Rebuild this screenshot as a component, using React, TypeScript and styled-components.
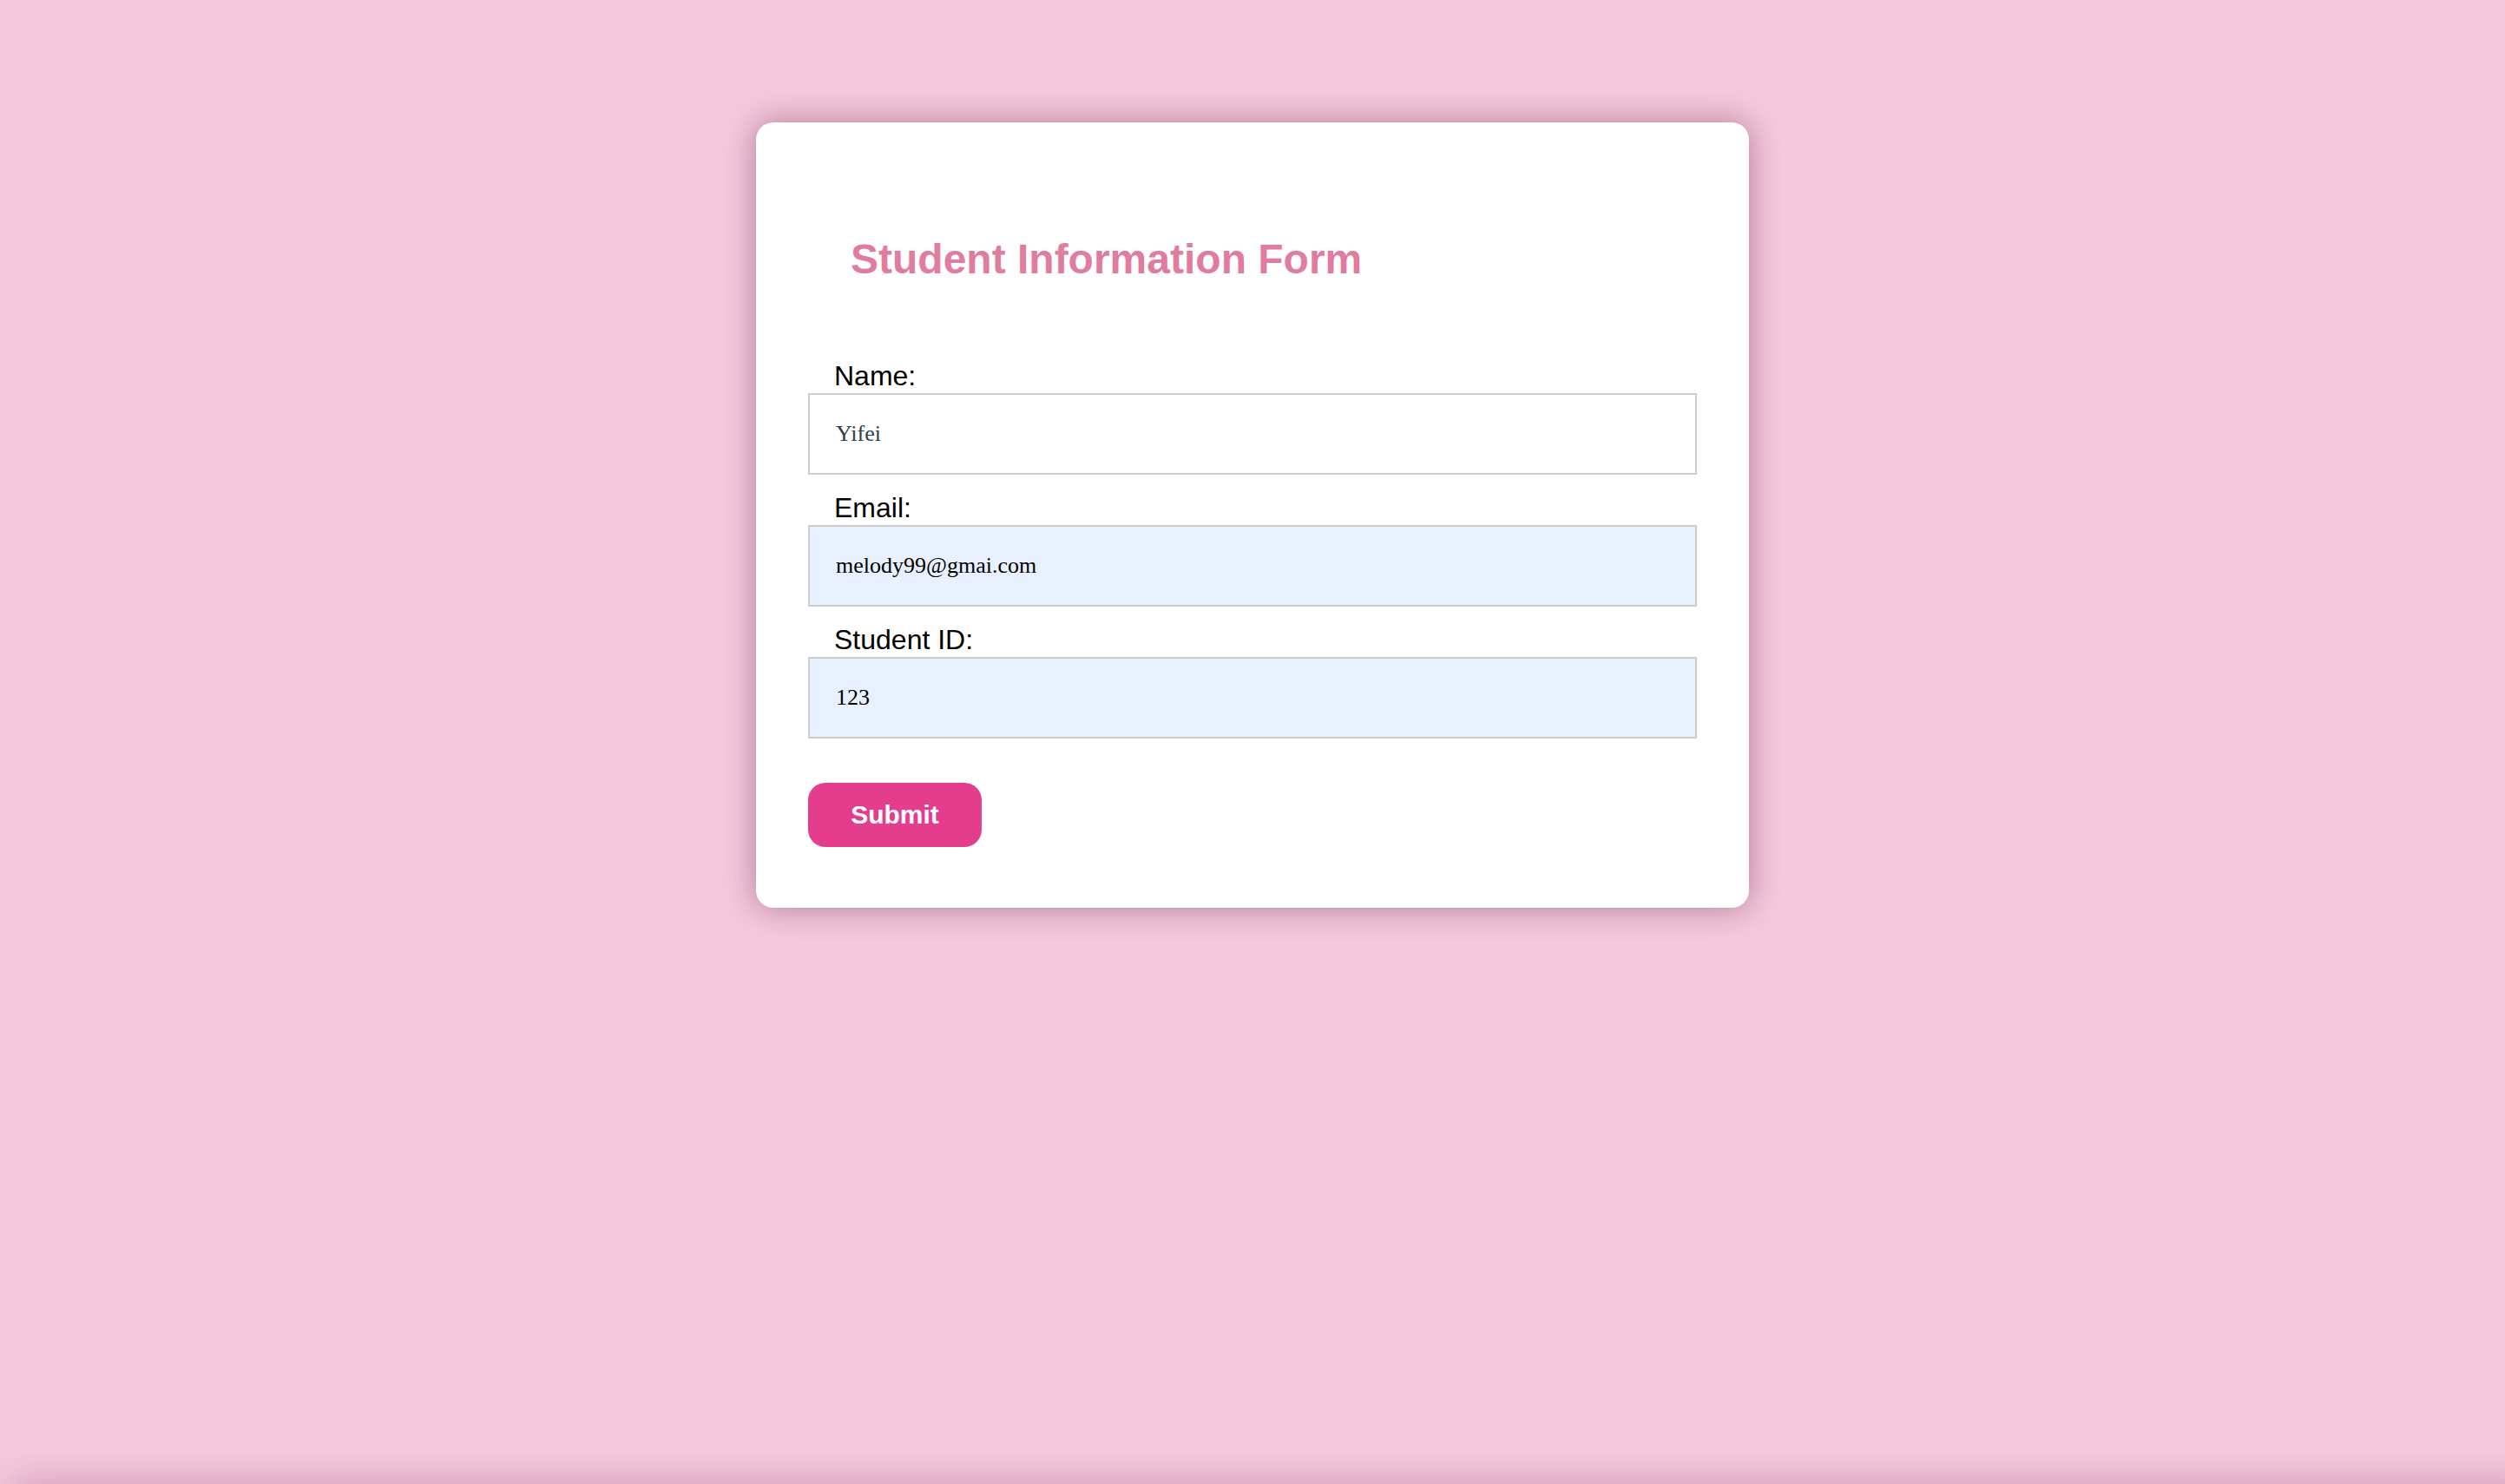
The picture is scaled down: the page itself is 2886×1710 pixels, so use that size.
import React from "react";
import styled, { createGlobalStyle } from "styled-components";

const GlobalStyle = createGlobalStyle`
  html, body {
    margin: 0;
    padding: 0;
    background: #f5c8dc;
  }
  body {
    font-family: "Liberation Sans", Arial, sans-serif;
  }
`;

const Page = styled.div`
  position: relative;
  height: 100vh;
  overflow: hidden;
  background: #f5c8dc;
  padding-top: 141px;
  box-sizing: border-box;

  &::after {
    content: "";
    position: absolute;
    top: 100%;
    left: 16px;
    right: -40px;
    height: 60px;
    background: #f5c8dc;
    box-shadow: 0 0 40px rgba(90, 20, 60, 0.28);
  }
`;

const Card = styled.form`
  width: 1144px;
  margin: 0 auto;
  box-sizing: border-box;
  padding: 60px 60px 70px;
  background: #ffffff;
  border-radius: 20px;
  box-shadow: 0 0 36px rgba(80, 20, 50, 0.42);
  display: flex;
  flex-direction: column;
  align-items: stretch;
`;

const Title = styled.h2`
  margin: 70px 0 89px;
  padding-left: 49px;
  font-family: "Liberation Sans", Arial, sans-serif;
  font-size: 48px;
  font-weight: 700;
  line-height: normal;
  color: #e07ca0;
`;

const Field = styled.div`
  display: flex;
  flex-direction: column;
  margin-bottom: 20px;
`;

const Label = styled.label`
  display: block;
  padding-left: 30px;
  margin-bottom: 1px;
  font-family: "Liberation Sans", Arial, sans-serif;
  font-size: 32px;
  line-height: normal;
  color: #000000;
`;

const Input = styled.input<{ $filled?: boolean }>`
  display: block;
  width: 100%;
  box-sizing: border-box;
  height: 94px;
  padding: 30px;
  border: 2px solid #cccccc;
  border-radius: 0;
  outline: none;
  font-family: "Liberation Serif", "Times New Roman", serif;
  font-size: 26px;
  line-height: normal;
  background: ${(p) => (p.$filled ? "#e8f0fe" : "#ffffff")};
  color: ${(p) => (p.$filled ? "#000000" : "#2c3e50")};
`;

const SubmitButton = styled.button`
  align-self: flex-start;
  margin-top: 31px;
  width: 200px;
  height: 74px;
  padding: 0;
  border: none;
  border-radius: 20px;
  background: #e43d8e;
  color: #ffffff;
  font-family: "Liberation Sans", Arial, sans-serif;
  font-size: 30px;
  font-weight: 700;
  cursor: pointer;
  display: flex;
  align-items: center;
  justify-content: center;
`;

const fields = [
  { id: "name", label: "Name:", value: "Yifei", filled: false },
  { id: "email", label: "Email:", value: "melody99@gmai.com", filled: true },
  { id: "sid", label: "Student ID:", value: "123", filled: true },
];

export default function App() {
  return (
    <>
      <GlobalStyle />
      <Page>
        <Card onSubmit={(e) => e.preventDefault()}>
          <Title>Student Information Form</Title>
          {fields.map((f) => (
            <Field key={f.id}>
              <Label htmlFor={f.id}>{f.label}</Label>
              <Input id={f.id} value={f.value} readOnly $filled={f.filled} />
            </Field>
          ))}
          <SubmitButton type="submit">Submit</SubmitButton>
        </Card>
      </Page>
    </>
  );
}
